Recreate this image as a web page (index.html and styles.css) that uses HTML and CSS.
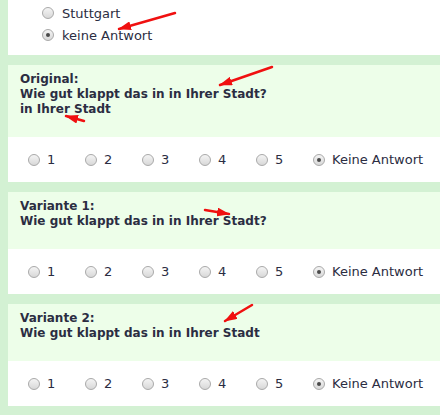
FILE: index.html
```html
<!DOCTYPE html>
<html lang="de">
<head>
  <meta charset="UTF-8" />
  <title>Umfrage</title>
  <link rel="stylesheet" href="styles.css">
</head>
<body>
  <div class="page">
    <div class="panel top">
      <label class="opt-line"><input type="radio" name="stadt"> Stuttgart</label>
      <label class="opt-line"><input type="radio" name="stadt" checked> keine Antwort</label>
    </div>

    <div class="question">
      <div class="q-head">
        Original:<br>
        Wie gut klappt das in in Ihrer Stadt?<br>
        in Ihrer Stadt
      </div>
      <div class="q-answers">
        <label class="opt"><input type="radio" name="q1"> 1</label>
        <label class="opt"><input type="radio" name="q1"> 2</label>
        <label class="opt"><input type="radio" name="q1"> 3</label>
        <label class="opt"><input type="radio" name="q1"> 4</label>
        <label class="opt"><input type="radio" name="q1"> 5</label>
        <label class="opt"><input type="radio" name="q1" checked> Keine Antwort</label>
      </div>
    </div>

    <div class="question">
      <div class="q-head">
        Variante 1:<br>
        Wie gut klappt das in in Ihrer Stadt?
      </div>
      <div class="q-answers">
        <label class="opt"><input type="radio" name="q2"> 1</label>
        <label class="opt"><input type="radio" name="q2"> 2</label>
        <label class="opt"><input type="radio" name="q2"> 3</label>
        <label class="opt"><input type="radio" name="q2"> 4</label>
        <label class="opt"><input type="radio" name="q2"> 5</label>
        <label class="opt"><input type="radio" name="q2" checked> Keine Antwort</label>
      </div>
    </div>

    <div class="question">
      <div class="q-head">
        Variante 2:<br>
        Wie gut klappt das in in Ihrer Stadt
      </div>
      <div class="q-answers">
        <label class="opt"><input type="radio" name="q3"> 1</label>
        <label class="opt"><input type="radio" name="q3"> 2</label>
        <label class="opt"><input type="radio" name="q3"> 3</label>
        <label class="opt"><input type="radio" name="q3"> 4</label>
        <label class="opt"><input type="radio" name="q3"> 5</label>
        <label class="opt"><input type="radio" name="q3" checked> Keine Antwort</label>
      </div>
    </div>
  </div>

  <!-- Anmerkungen (rote Pfeile) -->
  <svg class="marks" width="440" height="415" viewBox="0 0 440 415">
    <defs>
      <marker id="head" markerWidth="13" markerHeight="9" refX="12" refY="4.5" orient="auto" markerUnits="userSpaceOnUse">
        <path d="M0,0 L13,4.5 L0,9 z" fill="#f01010"/>
      </marker>
    </defs>
    <g stroke="#f01010" stroke-width="2.5" stroke-linecap="round" fill="none">
      <line x1="175" y1="13" x2="119" y2="29" marker-end="url(#head)"/>
      <line x1="272" y1="67" x2="220" y2="85" marker-end="url(#head)"/>
      <line x1="84" y1="121" x2="66" y2="116" marker-end="url(#head)"/>
      <line x1="205" y1="210" x2="229" y2="214" marker-end="url(#head)"/>
      <line x1="252" y1="305" x2="225" y2="321" marker-end="url(#head)"/>
    </g>
  </svg>
</body>
</html>
```

FILE: styles.css
```css
body {
  margin: 0;
  background: #d3f1d3;
  font-family: "DejaVu Sans", Verdana, sans-serif;
  font-size: 13px;
  color: #2b2d42;
}

.page {
  padding-left: 8px;
  padding-bottom: 20px;
}

.panel {
  background: #fff;
}

.top {
  height: 55px;
  box-sizing: border-box;
  padding: 2px 0 0 34px;
}

.opt-line {
  display: flex;
  align-items: center;
  height: 22px;
}

.question {
  margin-top: 10px;
}

.q-head {
  background: #edfee9;
  font-weight: bold;
  font-size: 12px;
  line-height: 15px;
  padding: 7px 12px 20px;
}

.q-answers {
  background: #fff;
  height: 45px;
  display: flex;
  align-items: center;
  padding-left: 20px;
}

.opt {
  display: inline-flex;
  align-items: center;
  min-width: 57px;
}

input[type="radio"] {
  appearance: none;
  -webkit-appearance: none;
  width: 12px;
  height: 12px;
  margin: 0 7px 0 0;
  border: 1px solid #a9a9a9;
  border-radius: 50%;
  background: linear-gradient(#f4f4f4, #d8d8d8);
  box-sizing: border-box;
  position: relative;
}

input[type="radio"]:checked::after {
  content: "";
  position: absolute;
  left: 3px;
  top: 3px;
  width: 4px;
  height: 4px;
  border-radius: 50%;
  background: #4a4a4a;
}

.opt-line input[type="radio"] {
  margin-right: 8px;
}

.marks {
  position: absolute;
  top: 0;
  left: 0;
  pointer-events: none;
}
```
